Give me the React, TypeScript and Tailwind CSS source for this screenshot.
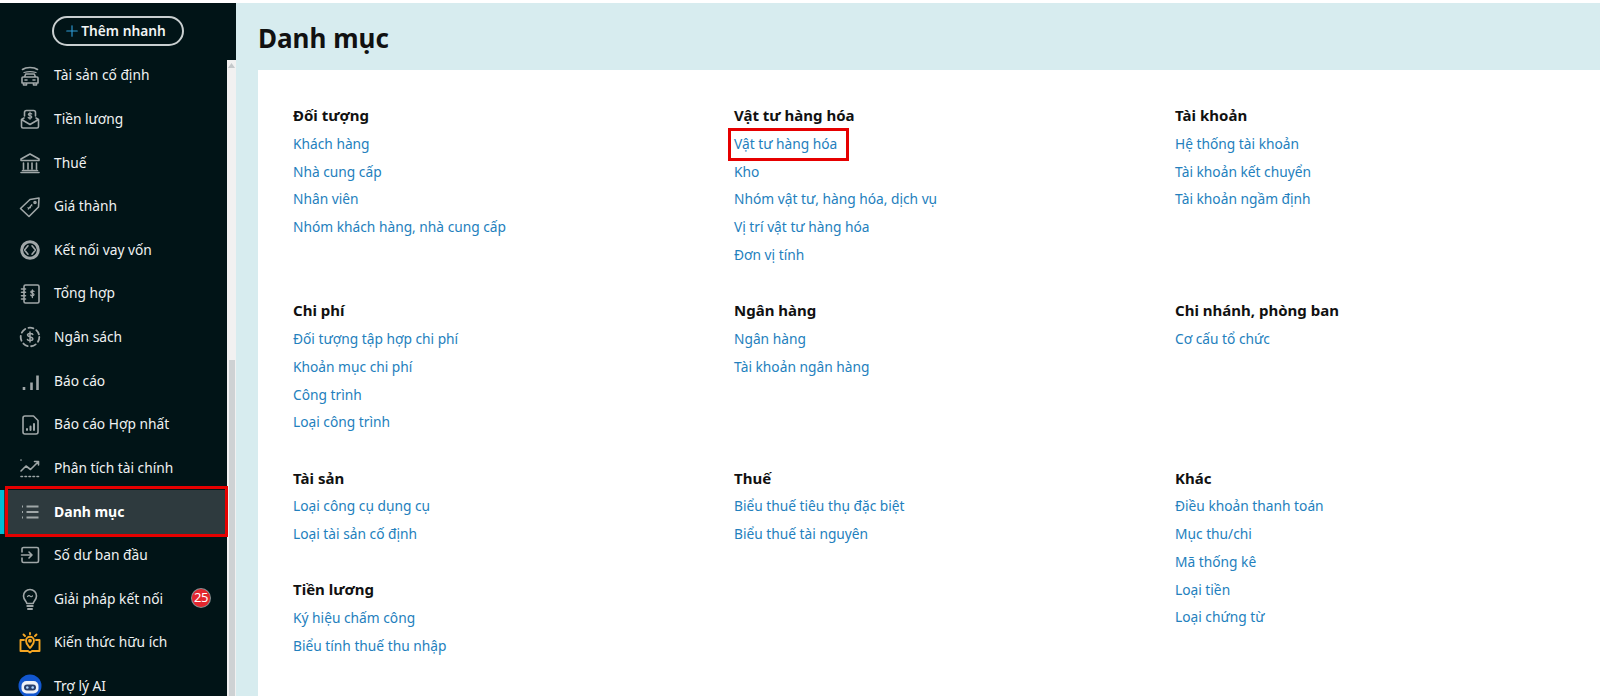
// Danh mục page: dark sidebar + three column category grid
import { Plus } from 'lucide-react';
import type { ReactNode } from 'react';

const S = { fill: 'none', stroke: '#a0a7a8', strokeWidth: 1.6, strokeLinecap: 'round', strokeLinejoin: 'round' } as const;

function Ico({ children }: { children: ReactNode }) {
  return <svg width="24" height="24" viewBox="0 0 24 24" {...S}>{children}</svg>;
}

const icons: Record<string, ReactNode> = {
  car: <Ico><path d="M4.500 5.500C8 2.800 16 2.800 19.500 5.500" /><path d="M6 8.500c3.500-1 8.500-1 12 0" strokeWidth="1.300" /><path d="M6.500 13l1.200-3h8.600l1.200 3M5 13h14a1 1 0 0 1 1 1v5H4v-5a1 1 0 0 1 1-1zM5.500 19v2h3v-2M15.500 19v2h3v-2M7 16h2M15 16h2" /></Ico>,
  pay: <Ico><path d="M6.500 9V5.500a2 2 0 0 1 2-2h7a2 2 0 0 1 2 2V9" /><path d="M6 11l-2.500 1.500V19.500a1.500 1.500 0 0 0 1.500 1.500h14a1.500 1.500 0 0 0 1.500-1.500V12.500L18 11M3.500 12.500L12 17.500l8.500-5" /><path d="M13.800 7c-.5-1-3.500-1-3.500.5s3.500.8 3.500 2.500-3 1.500-3.600.4M12 5.200v7" strokeWidth="1.200" /></Ico>,
  bank: <Ico><path d="M12 3l9 5v1.500H3V8zM5.500 12v6M10 12v6M14 12v6M18.500 12v6M3 21.500h18M4.500 19.500h15" /></Ico>,
  tag: <Ico><path d="M2.500 13.500L12 4.500 21 3l-.5 9-9.500 9.500z" /><circle cx="17" cy="7.500" r="1" /><path d="M14 11c-.4-1-2-.2-1.500.8s-2.200 2-2.500.8M13.800 9.500l-3.600 4.600" strokeWidth="1.100" /></Ico>,
  loan: <Ico><circle cx="12" cy="12" r="8.300" strokeWidth="3" /><path d="M10.800 6.500L5.800 12l5 5.500M13.200 6.500l5 5.500-5 5.500" stroke="#011417" strokeWidth="1.200" /><path d="M10 7.800L6.500 12l3.500 4.200M14 7.800l3.500 4.200-3.500 4.200" strokeWidth="1.600" /></Ico>,
  book: <Ico><rect x="6" y="3" width="15" height="18" rx="1.500" /><path d="M3.500 7h4M3.500 10.300h4M3.500 13.700h4M3.500 17h4" /><path d="M16 9.500c-.4-1-3.200-1-3.200.6s3.200.9 3.200 2.500-2.800 1.600-3.300.4M14.400 8v7.500" strokeWidth="1.300" /></Ico>,
  budget: <Ico><circle cx="12" cy="12" r="9.300" strokeDasharray="5 3.400" strokeWidth="1.800" /><path d="M14.800 9.500c-.5-1.400-5.300-1.400-5.300.6 0 2.400 5.300 1.300 5.300 3.800 0 2-4.800 2-5.300.5M12 7v10" strokeWidth="1.500" /></Ico>,
  bars: <Ico><path d="M6 18v3M13.500 13.500V21M19.500 6.500V21" strokeWidth="2.600" strokeLinecap="butt" /></Ico>,
  doc: <Ico><path d="M5 5a2 2 0 0 1 2-2h8.500L20 7.500V19a2 2 0 0 1-2 2H7a2 2 0 0 1-2-2z" /><path d="M9 17v-1M12.500 17v-3.500M16 17v-6" strokeWidth="2" /></Ico>,
  trend: <Ico><path d="M3 15l5-5 4.500 3.500 7.500-7.500M16.500 5.500h4v3.500" /><path d="M3 20.500h18" strokeDasharray="1.500 2.500" /><path d="M3 4v.1" /></Ico>,
  list: <Ico><path d="M4 6.500h1M4 12h1M4 17.500h1M8.500 6.500H20.500M8.500 12H20.500M8.500 17.500H20.500" strokeWidth="2.200" strokeLinecap="butt" /></Ico>,
  open: <Ico><path d="M4 9V6a1.500 1.500 0 0 1 1.500-1.500H19A1.500 1.500 0 0 1 20.500 6v12a1.500 1.500 0 0 1-1.500 1.500H5.500A1.500 1.500 0 0 1 4 18v-3" /><path d="M3.500 12H14M11 9l3 3-3 3" /></Ico>,
  bulb: <Ico><path d="M8.800 16.500c0-2-3.300-3.500-3.300-7.500a6.500 6.500 0 0 1 13 0c0 4-3.300 5.500-3.300 7.500z" /><path d="M9.500 9.500c1-1.300 2.200-1 2.700-.2s1.500.5 2.300-.4" strokeWidth="1.200" /><path d="M9.300 19h5.400M10 22h4" strokeWidth="2" /></Ico>,
};

function BookPin() {
  return (
    <svg width="24" height="24" viewBox="0 0 24 24" fill="none" stroke="#f5a623" strokeWidth="1.900" strokeLinejoin="round" strokeLinecap="round">
      <path d="M6 9H2.500v11H10l2 1.500 2-1.500h7.500V9H18" />
      <path d="M12 17c-2-2.700-4-4.200-4-7.300a4 4 0 0 1 8 0c0 3.100-2 4.600-4 7.300z" />
      <circle cx="12" cy="9.800" r="1" />
      <path d="M12 2v1.200M5.500 3.500l1.500 1.500M18.500 3.500L17 5" />
    </svg>
  );
}

function Robot() {
  return (
    <svg width="24" height="24" viewBox="0 0 24 24">
      <circle cx="12" cy="12" r="11.500" fill="#1257cf" />
      <rect x="3.500" y="7" width="17" height="12.500" rx="5" fill="#eef1f7" />
      <rect x="6" y="10.500" width="12" height="6" rx="3" fill="#2a3f6b" />
      <circle cx="9.300" cy="13.500" r="1.300" fill="#a9d4ff" />
      <circle cx="14.700" cy="13.500" r="1.300" fill="#a9d4ff" />
    </svg>
  );
}

const menu: { label: string; icon: ReactNode; active?: boolean; badge?: string }[] = [
  { label: 'Tài sản cố định', icon: icons.car },
  { label: 'Tiền lương', icon: icons.pay },
  { label: 'Thuế', icon: icons.bank },
  { label: 'Giá thành', icon: icons.tag },
  { label: 'Kết nối vay vốn', icon: icons.loan },
  { label: 'Tổng hợp', icon: icons.book },
  { label: 'Ngân sách', icon: icons.budget },
  { label: 'Báo cáo', icon: icons.bars },
  { label: 'Báo cáo Hợp nhất', icon: icons.doc },
  { label: 'Phân tích tài chính', icon: icons.trend },
  { label: 'Danh mục', icon: icons.list, active: true },
  { label: 'Số dư ban đầu', icon: icons.open },
  { label: 'Giải pháp kết nối', icon: icons.bulb, badge: '25' },
  { label: 'Kiến thức hữu ích', icon: <BookPin /> },
  { label: 'Trợ lý AI', icon: <Robot /> },
];

const groups: { title: string; links: string[]; cls?: string }[] = [
  { title: 'Đối tượng', links: ['Khách hàng', 'Nhà cung cấp', 'Nhân viên', 'Nhóm khách hàng, nhà cung cấp'] },
  { title: 'Vật tư hàng hóa', links: ['Vật tư hàng hóa', 'Kho', 'Nhóm vật tư, hàng hóa, dịch vụ', 'Vị trí vật tư hàng hóa', 'Đơn vị tính'] },
  { title: 'Tài khoản', links: ['Hệ thống tài khoản', 'Tài khoản kết chuyển', 'Tài khoản ngầm định'] },
  { title: 'Chi phí', links: ['Đối tượng tập hợp chi phí', 'Khoản mục chi phí', 'Công trình', 'Loại công trình'] },
  { title: 'Ngân hàng', links: ['Ngân hàng', 'Tài khoản ngân hàng'] },
  { title: 'Chi nhánh, phòng ban', links: ['Cơ cấu tổ chức'] },
  { title: 'Tài sản', links: ['Loại công cụ dụng cụ', 'Loại tài sản cố định'] },
  { title: 'Thuế', links: ['Biểu thuế tiêu thụ đặc biệt', 'Biểu thuế tài nguyên'] },
  { title: 'Khác', links: ['Điều khoản thanh toán', 'Mục thu/chi', 'Mã thống kê', 'Loại tiền', 'Loại chứng từ'], cls: 'row-span-2' },
  { title: 'Tiền lương', links: ['Ký hiệu chấm công', 'Biểu tính thuế thu nhập'] },
];

function Sidebar() {
  return (
    <aside className="w-[236px] shrink-0 h-full bg-[#011417] flex flex-col overflow-hidden">
      <div className="h-[57px] shrink-0 flex justify-center pt-[13px] pr-[1px]">
        <button className="relative z-10 w-[132px] h-[30px] rounded-full border-2 border-[#c9cfd0] flex items-center justify-center gap-0 pr-[6px] text-[#f2f4f4] text-[13.750px] font-semibold">
          <Plus size={18} strokeWidth={1.500} className="text-[#2f9bd6]" />
          Thêm nhanh
        </button>
      </div>
      <div className="flex-1 flex min-h-0">
        <nav className="w-[227px] shrink-0 -mt-[6px]">
          {menu.map(m => (
            <div
              key={m.label}
              className={m.active
                ? 'relative h-[43.600px] flex items-center pl-[18px] gap-[12px] bg-[#2e3a3e] text-white font-bold text-sm'
                : 'relative h-[43.600px] flex items-center pl-[18px] gap-[12px] text-[#f0f2f2] text-[13.750px]'}
            >
              {m.active && <span className="absolute left-0 top-0 bottom-0 w-[4px] bg-[#00bcd4]" />}
              {m.active && <span className="absolute left-[5px] -right-[1px] -top-[4px] -bottom-[3px] border-[3px] border-[#e60000]" />}
              {m.icon}
              <span className="whitespace-nowrap">{m.label}</span>
              {m.badge && (
                <span className="absolute left-[192px] top-[12px] w-[18px] h-[18px] rounded-full bg-[#e3262e] ring-1 ring-[#8a9092] flex items-center justify-center text-white text-[13px] tracking-tight">{m.badge}</span>
              )}
            </div>
          ))}
        </nav>
        <div className="w-[9px] shrink-0 bg-[#f1f1f1] flex flex-col items-center pt-[3px]">
          <svg width="7" height="5" viewBox="0 0 7 5"><path d="M3.500 0L7 5H0z" fill="#c4c8ca" /></svg>
          <div className="flex-1 w-[6px] mt-[292px] bg-[#ced2d4]" />
        </div>
      </div>
    </aside>
  );
}

export default function App() {
  return (
    <div className="w-[1600px] h-[696px] bg-white pt-[3px] overflow-hidden font-['Noto_Sans','Liberation_Sans',sans-serif]">
      <div className="h-full flex">
        <Sidebar />
        <main className="flex-1 bg-[#d7ecef] pl-[22px] flex flex-col">
          <div className="h-[67px] shrink-0 flex items-center pt-[2px]">
            <h1 className="text-[26px] font-bold text-[#111] leading-none">Danh mục</h1>
          </div>
          <div className="flex-1 bg-white pl-[35px] pt-[31px] grid grid-cols-[441px_441px_1fr] gap-y-[26.800px] content-start">
            {groups.map(g => (
              <section key={g.title} className={g.cls}>
                <h3 className="h-[29.300px] flex items-center text-[15px] font-bold text-[#111]">{g.title}</h3>
                {g.links.map((l, i) => (
                  <div key={l} className="h-[27.800px] flex items-center">
                    <a className={g.title === 'Vật tư hàng hóa' && i === 0
                      ? 'relative text-[13.750px] text-[#2380bd] cursor-pointer'
                      : 'text-[13.750px] text-[#2380bd] cursor-pointer'}>
                      {l}
                      {g.title === 'Vật tư hàng hóa' && i === 0 && (
                        <span className="absolute left-[-6px] right-[-12px] top-[-6px] bottom-[-6px] border-[3px] border-[#e60000]" />
                      )}
                    </a>
                  </div>
                ))}
              </section>
            ))}
          </div>
        </main>
      </div>
    </div>
  );
}
